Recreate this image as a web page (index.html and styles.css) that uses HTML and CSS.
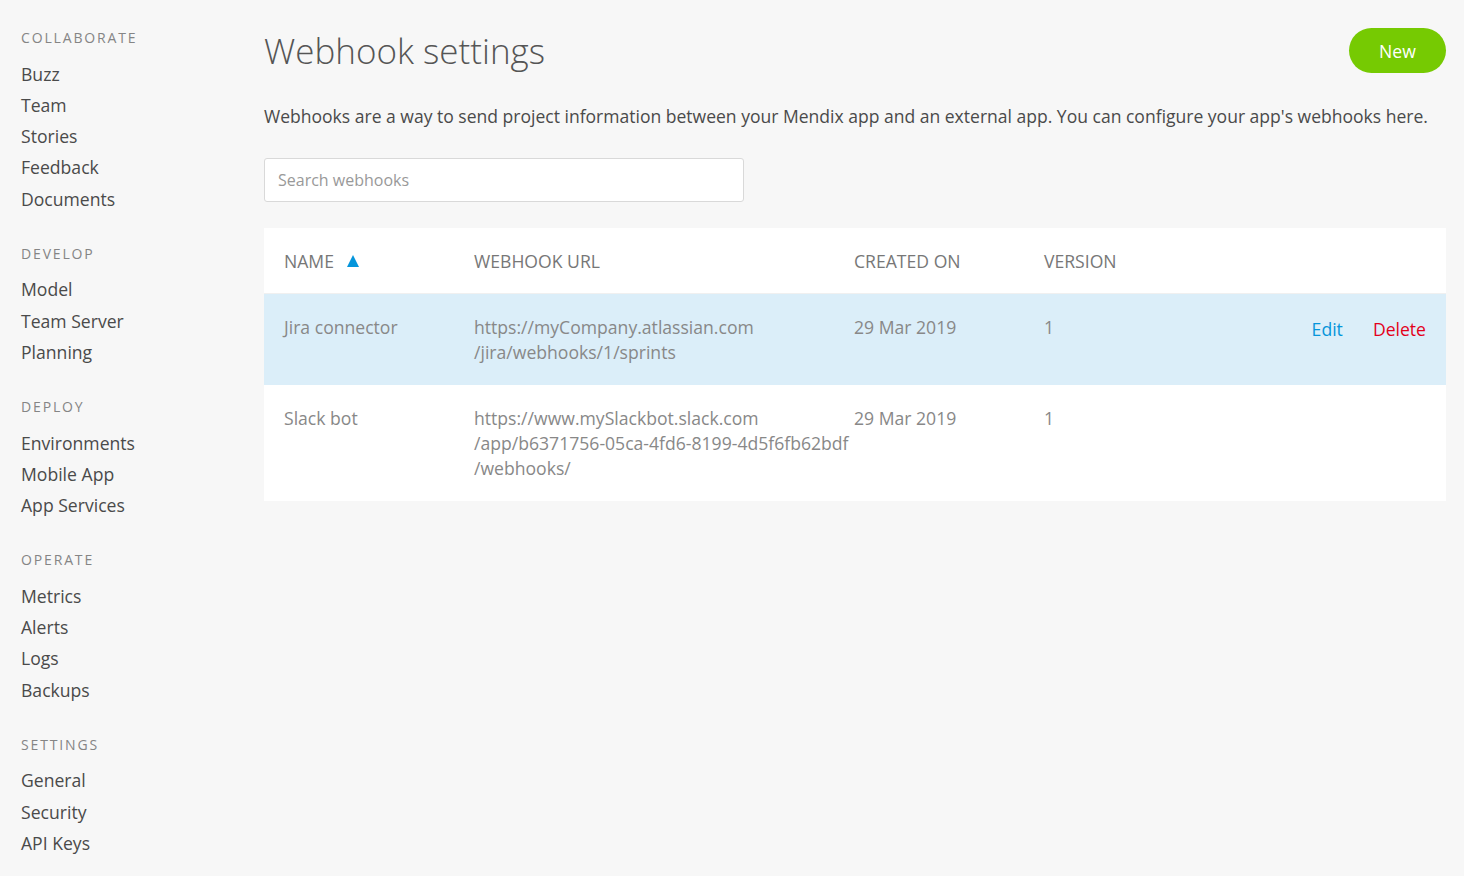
FILE: index.html
```html
<!DOCTYPE html>
<html>
<head>
<meta charset="utf-8">
<link rel="stylesheet" href="styles.css">
</head>
<body>
<div class="app">
  <nav class="sidebar">
    <div class="nav-section">
      <div class="nav-title">COLLABORATE</div>
      <a class="nav-item">Buzz</a>
      <a class="nav-item">Team</a>
      <a class="nav-item">Stories</a>
      <a class="nav-item">Feedback</a>
      <a class="nav-item">Documents</a>
    </div>
    <div class="nav-section">
      <div class="nav-title">DEVELOP</div>
      <a class="nav-item">Model</a>
      <a class="nav-item">Team Server</a>
      <a class="nav-item">Planning</a>
    </div>
    <div class="nav-section">
      <div class="nav-title">DEPLOY</div>
      <a class="nav-item">Environments</a>
      <a class="nav-item">Mobile App</a>
      <a class="nav-item">App Services</a>
    </div>
    <div class="nav-section">
      <div class="nav-title">OPERATE</div>
      <a class="nav-item">Metrics</a>
      <a class="nav-item">Alerts</a>
      <a class="nav-item">Logs</a>
      <a class="nav-item">Backups</a>
    </div>
    <div class="nav-section">
      <div class="nav-title">SETTINGS</div>
      <a class="nav-item">General</a>
      <a class="nav-item">Security</a>
      <a class="nav-item">API Keys</a>
    </div>
  </nav>
  <main class="main">
    <div class="page-header">
      <h1 class="page-title">Webhook settings</h1>
      <button class="btn-new">New</button>
    </div>
    <p class="description">Webhooks are a way to send project information between your Mendix app and an external app. You can configure your app's webhooks here.</p>
    <div class="search">
      <input class="search-input" type="text" placeholder="Search webhooks">
    </div>
    <div class="table">
      <div class="row head">
        <div class="cell c-name">NAME <svg class="sort" width="12" height="12" viewBox="0 0 12 12"><polygon points="6,0 12,12 0,12" fill="#0595db"/></svg></div>
        <div class="cell c-url">WEBHOOK URL</div>
        <div class="cell c-date">CREATED ON</div>
        <div class="cell c-ver">VERSION</div>
        <div class="cell c-act"></div>
      </div>
      <div class="row selected">
        <div class="cell c-name">Jira connector</div>
        <div class="cell c-url">https://myCompany.atlassian.com<br>/jira/webhooks/1/sprints</div>
        <div class="cell c-date">29 Mar 2019</div>
        <div class="cell c-ver">1</div>
        <div class="cell c-act"><a class="act edit">Edit</a><a class="act delete">Delete</a></div>
      </div>
      <div class="row">
        <div class="cell c-name">Slack bot</div>
        <div class="cell c-url">https://www.mySlackbot.slack.com<br>/app/b6371756-05ca-4fd6-8199-4d5f6fb62bdf<br>/webhooks/</div>
        <div class="cell c-date">29 Mar 2019</div>
        <div class="cell c-ver">1</div>
        <div class="cell c-act"></div>
      </div>
    </div>
  </main>
</div>
</body>
</html>
```
FILE: styles.css
```css
* { box-sizing: border-box; }
html, body { margin: 0; padding: 0; }
body {
  background: #f7f7f7;
  font-family: "Open Sans", "Noto Sans", sans-serif;
  color: #4a4a4a;
  width: 1464px;
  height: 876px;
  overflow: hidden;
}
.app { display: flex; }
.sidebar {
  width: 264px;
  flex: 0 0 264px;
  padding: 27px 0 0 21px;
  display: flex;
  flex-direction: column;
  gap: 28px;
}
.nav-section { display: flex; flex-direction: column; }
.nav-title {
  font-size: 14px;
  letter-spacing: 1.85px;
  color: #858585;
  line-height: 22px;
  margin-bottom: 9.5px;
}
.nav-item {
  font-size: 17.6px;
  line-height: 31.25px;
  color: #4a4a4a;
}
.main {
  flex: 1;
  padding: 28px 18px 0 0;
}
.page-header {
  display: flex;
  justify-content: space-between;
  align-items: center;
  height: 45px;
}
.page-title {
  margin: 0;
  font-weight: 300;
  font-size: 35px;
  color: #555;
  line-height: 45px;
}
.btn-new {
  width: 97px;
  height: 45px;
  border: none;
  border-radius: 23px;
  background: #76ca02;
  color: #fff;
  font-family: "Open Sans", sans-serif;
  font-size: 17.6px;
}
.description {
  margin: 31px 0 0 0;
  font-size: 17.55px;
  line-height: 25px;
  color: #4a4a4a;
  white-space: nowrap;
}
.search { margin-top: 29px; }
.search-input {
  display: block;
  width: 480px;
  height: 44px;
  border: 1px solid #d9d9d9;
  border-radius: 3px;
  background: #fff;
  padding: 0 13px;
  font-family: "Open Sans", sans-serif;
  font-size: 16px;
  color: #555;
  outline: none;
}
.search-input::placeholder { color: #999; }
.table {
  margin-top: 26px;
  background: #fff;
}
.row {
  display: flex;
  padding: 21px 0 20px;
  border-bottom: 1px solid #f0f0f0;
  font-size: 17.6px;
  line-height: 25px;
  color: #888;
}
.row:last-child { border-bottom: none; }
.row.head { color: #777; padding: 21px 0 19px; }
.row.selected { background: #dbeef9; border-bottom: none; }
.cell { padding-left: 20px; }
.c-name { width: 190px; display: flex; align-items: flex-start; }
.head .c-name { align-items: center; }
.sort { margin-left: 13px; margin-top: -2px; }
.c-url { width: 380px; white-space: nowrap; }
.c-date { width: 190px; }
.c-ver { width: 190px; }
.c-act {
  flex: 1;
  display: flex;
  justify-content: flex-end;
  padding-right: 20px;
  gap: 30px;
  padding-top: 2px;
}
.act { font-size: 17.6px; }
.edit { color: #0595db; }
.delete { color: #e3001b; }
```
